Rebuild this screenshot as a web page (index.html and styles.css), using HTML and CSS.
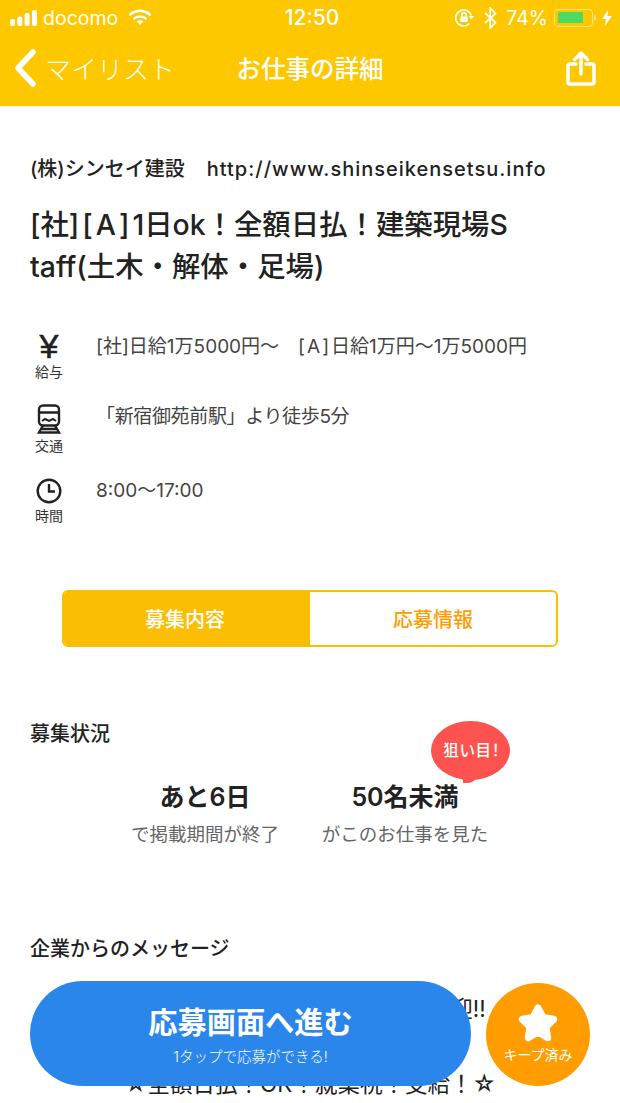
FILE: index.html
```html
<!DOCTYPE html>
<html lang="ja">
<head>
  <meta charset="UTF-8">
  <title>お仕事の詳細</title>
  <meta name="viewport" content="width=device-width, initial-scale=1.0">
  <link rel="stylesheet" href="styles.css">
</head>
<body>
  <header class="app-header">
    <div class="status-bar">
      <div class="status-left">
        <svg class="signal" width="27" height="16" viewBox="0 0 27 16"><rect x="0" y="9" width="5" height="7" rx="2"/><rect x="7.300" y="6.500" width="5" height="9.500" rx="2"/><rect x="14.600" y="3" width="5" height="13" rx="2"/><rect x="22" y="0" width="5" height="16" rx="2"/></svg>
        <span>docomo</span>
        <svg class="wifi" width="24" height="17" viewBox="0 0 24 17"><path d="M1.500 6.200a15 15 0 0 1 21 0" /><path d="M5.500 10a9.500 9.500 0 0 1 13 0"/><path d="M12 16l-3.200-3.400a4.500 4.500 0 0 1 6.400 0z" class="wifi-dot"/></svg>
      </div>
      <div class="status-time">12:50</div>
      <div class="status-right">
        <svg width="22" height="20" viewBox="0 0 22 20" class="lock"><path d="M17.300 7.500A8 8 0 1 0 15.500 15.500"/><rect x="6.300" y="8.500" width="7.400" height="5.500" rx="0.800" class="solid"/><path d="M7.800 8.500V7a2.200 2.200 0 0 1 4.400 0v1.500"/><path d="M14.500 8h6l-3 3.300z" class="solid"/></svg>
        <svg width="13" height="22" viewBox="0 0 13 22" class="bt"><path d="M1 6l10.500 9.500L6.200 21V1l5.300 5.500L1 16"/></svg>
        <span class="pct">74%</span>
        <div class="battery"><div class="battery-fill"></div></div>
        <div class="battery-cap"></div>
        <svg width="10" height="16" viewBox="0 0 10 16" class="bolt"><path d="M6 0L0 9h4l-1 7 7-10H5.500z"/></svg>
      </div>
    </div>
    <nav class="nav-bar">
      <a class="nav-back">
        <svg width="22" height="38" viewBox="0 0 22 38"><path d="M19 3L4 19l15 16"/></svg>
        <span>マイリスト</span>
      </a>
      <h1>お仕事の詳細</h1>
      <svg class="share" width="30" height="36" viewBox="0 0 30 36"><path d="M10 14H4a2 2 0 0 0-2 2v16a2 2 0 0 0 2 2h22a2 2 0 0 0 2-2V16a2 2 0 0 0-2-2h-6"/><path d="M15 24V3M8.500 9.500L15 3l6.500 6.500"/></svg>
    </nav>
  </header>

  <main class="content">
    <p class="company">(株)シンセイ建設　<span class="url">http://www.shinseikensetsu.info</span></p>
    <h2 class="job-title">[社]<span class="wide">[A]</span>1日ok！全額日払！建築現場S<br>taff(土木・解体・足場)</h2>

    <ul class="facts">
      <li class="fact fact-pay">
        <div class="fact-icon">
          <span class="yen">¥</span>
          <small>給与</small>
        </div>
        <p>[社]日給1万5000円～　<span class="wide-sm">[A]</span>日給1万円～1万5000円</p>
      </li>
      <li class="fact fact-train">
        <div class="fact-icon">
          <svg width="26" height="30" viewBox="0 0 26 30"><rect x="3" y="1.500" width="20" height="20" rx="4"/><path d="M3 8.500h20M7 21.500L3 28.500h20l-4-7M5.500 25h15"/><path d="M6 17l3-2 4 2 4-2 3 2" class="thin"/></svg>
          <small>交通</small>
        </div>
        <p>「新宿御苑前駅」より徒歩5分</p>
      </li>
      <li class="fact fact-time">
        <div class="fact-icon">
          <svg width="26" height="26" viewBox="0 0 26 26"><circle cx="13" cy="13" r="11.300"/><path d="M13 6v7.500h6"/></svg>
          <small>時間</small>
        </div>
        <p>8:00～17:00</p>
      </li>
    </ul>

    <div class="tabs">
      <div class="tab tab-active">募集内容</div>
      <div class="tab">応募情報</div>
    </div>

    <section class="status-section">
      <h3>募集状況</h3>
      <div class="stats">
        <div class="stat">
          <strong>あと6日</strong>
          <span>で掲載期間が終了</span>
        </div>
        <div class="stat">
          <strong>50名未満</strong>
          <span>がこのお仕事を見た</span>
          <div class="bubble">狙い目！</div>
        </div>
      </div>
    </section>

    <section class="message-section">
      <h3>企業からのメッセージ</h3>
      <p class="message">☆未経験者・初心者の方も大歓迎!!<br>☆全額日払！OK！就業祝！支給！☆</p>
    </section>
  </main>

  <div class="actions">
    <button class="apply-btn">
      <b>応募画面へ進む</b>
      <span>1タップで応募ができる!</span>
    </button>
    <button class="keep-btn">
      <svg width="42" height="40" viewBox="0 0 42 40"><path d="M21 5l5 9.500 10.700 1.800-7.700 7.700 1.700 10.800L21 29l-9.700 5.800L13 24l-7.700-7.700L16 14.500z"/></svg>
      <span>キープ済み</span>
    </button>
  </div>
</body>
</html>
```

FILE: styles.css
```css
* { box-sizing: border-box; }
html, body { margin: 0; padding: 0; }
body {
  width: 620px;
  height: 1103px;
  overflow: hidden;
  position: relative;
  background: #fff;
  color: #222;
  font-family: "Inter", "Noto Sans CJK JP", sans-serif;
}
h1, h2, h3, p, ul { margin: 0; padding: 0; }
ul { list-style: none; }

/* header */
.app-header { background: #fdc800; height: 106px; color: #fff; }
.status-bar {
  height: 35px;
  padding: 0 8px 0 10px;
  display: grid;
  grid-template-columns: 1fr auto 1fr;
  align-items: center;
  font-size: 19.500px;
}
.status-left, .status-right { display: flex; align-items: center; }
.status-left { gap: 6px; }
.status-left .signal { fill: #fff; }
.status-left .wifi { margin-left: 4px; fill: none; stroke: #fff; stroke-width: 2.600; }
.status-left .wifi-dot { fill: #fff; stroke: none; }
.status-time { font-weight: 500; font-size: 21px; margin-left: 2px; }
.status-right { justify-content: flex-end; }
.status-right svg { fill: none; stroke: #fff; stroke-width: 1.700; }
.status-right .solid { fill: #fff; stroke: none; }
.status-right .lock { margin-right: 8px; }
.status-right .bt { margin-right: 9px; }
.status-right .pct { margin-right: 6px; font-size: 19.500px; }
.battery {
  width: 39px;
  height: 18px;
  border: 1.500px solid #ffe27a;
  border-radius: 4px;
  padding: 2.500px;
}
.battery-fill { width: 25px; height: 100%; background: #4cd964; }
.battery-cap { width: 2px; height: 6px; margin: 0 6px 0 1px; background: #ffe27a; border-radius: 0 2px 2px 0; }
.status-right .bolt { fill: #fff; stroke: none; }

.nav-bar {
  height: 71px;
  position: relative;
  display: flex;
  align-items: center;
  justify-content: space-between;
  padding: 0 24px 6px 14px;
}
.nav-back { display: flex; align-items: center; gap: 9px; font-size: 26px; font-weight: 300; }
.nav-back svg { fill: none; stroke: #fff; stroke-width: 5.500; stroke-linecap: round; stroke-linejoin: round; }
.nav-bar h1 {
  position: absolute;
  left: 0;
  right: 0;
  text-align: center;
  font-size: 24.500px;
  font-weight: 500;
}
.share { fill: none; stroke: #fff; stroke-width: 3.500; stroke-linecap: round; stroke-linejoin: round; }

/* job summary */
.content { padding: 0 30px; }
.company { margin-top: 46px; font-size: 20px; line-height: 34px; font-weight: 500; white-space: nowrap; }
.url { letter-spacing: 1px; margin-left: 2px; }
.job-title {
  margin-top: 18px;
  font-size: 28.400px;
  line-height: 42px;
  font-weight: 500;
  white-space: nowrap;
}
.wide { letter-spacing: 3px; margin-left: 3px; }
.wide-sm { letter-spacing: 2px; }
.facts { margin-top: 42px; padding-left: 3px; }
.fact { display: flex; align-items: flex-start; }
.fact-icon { width: 32px; display: flex; flex-direction: column; align-items: center; }
.fact-icon small { font-size: 14px; line-height: 20px; color: #333; margin-top: 2px; }
.fact-icon svg { fill: none; stroke: #222; stroke-width: 2.400; display: block; }
.fact-icon .thin { stroke-width: 2; }
.yen { margin-top: 1px; margin-bottom: -1px; font-size: 34px; line-height: 30px; font-weight: 400; font-family: "Liberation Sans", sans-serif; -webkit-text-stroke: 0.600px #222; }
.fact p { margin-left: 31px; font-size: 19px; line-height: 28px; color: #444; white-space: nowrap; }
.fact-pay { height: 74px; }
.fact-pay p { margin-top: 3px; }
.fact-train { height: 74px; }
.fact-train p { margin-top: -1px; letter-spacing: -0.350px; }
.fact-time p { margin-top: -1px; }

/* tabs */
.tabs {
  margin: 64px 32px 0;
  height: 57px;
  display: flex;
  border: 2px solid #fcbe04;
  border-radius: 6px;
  overflow: hidden;
}
.tab {
  flex: 0 0 50%;
  display: flex;
  align-items: center;
  justify-content: center;
  font-size: 20px;
  font-weight: 500;
  color: #ff9d00;
}
.tab-active { background: #fcbe04; color: #fff; padding-right: 4px; }

/* status */
.status-section { margin-top: 72px; }
h3 { font-size: 20px; line-height: 30px; font-weight: 500; }
.stats { display: flex; margin: 30px 0 0 75px; }
.stat { width: 200px; position: relative; display: flex; flex-direction: column; align-items: center; }
.stat strong { font-size: 25px; line-height: 36px; font-weight: 600; }
.stat span { margin-top: 5px; font-size: 18.500px; line-height: 28px; color: #666; white-space: nowrap; }
.bubble {
  position: absolute;
  left: 126px;
  top: -58px;
  width: 79px;
  height: 59px;
  padding: 0 0 3px 3px;
  display: flex;
  align-items: center;
  justify-content: center;
  background: #fc5350;
  color: #fff;
  font-size: 15.500px;
  font-weight: 500;
  font-feature-settings: "palt";
  letter-spacing: 1px;
  border-radius: 50%;
}
/* tail of the speech bubble */
.bubble::after {
  content: "";
  position: absolute;
  left: 32px;
  bottom: -3px;
  width: 16px;
  height: 12px;
  background: #fc5350;
  border-radius: 0 0 14px 1px;
}

/* message */
.message-section { margin-top: 86px; }
.message { margin-top: 7px; font-size: 22.500px; line-height: 75px; text-align: center; white-space: nowrap; }

/* bottom buttons */
.actions {
  position: absolute;
  left: 30px;
  right: 30px;
  top: 981px;
  display: flex;
  align-items: center;
  justify-content: space-between;
}
.actions button { border: none; color: #fff; font-family: inherit; padding: 0; display: flex; flex-direction: column; align-items: center; }
.apply-btn { width: 441px; height: 105px; border-radius: 53px; background: #2a86ea; justify-content: center; }
.apply-btn b { margin-top: 2px; font-size: 29.200px; line-height: 42px; font-weight: 700; }
.apply-btn span { margin-top: 2px; font-size: 14.500px; line-height: 22px; font-weight: 300; }
.keep-btn { width: 104px; height: 103px; border-radius: 50%; background: #ff9d00; padding-top: 20px !important; margin-top: 2px; }
.keep-btn svg { fill: #fff; stroke: #fff; stroke-width: 7; stroke-linejoin: round; }
.keep-btn span { margin-top: 2px; font-size: 14px; line-height: 20px; }
```
